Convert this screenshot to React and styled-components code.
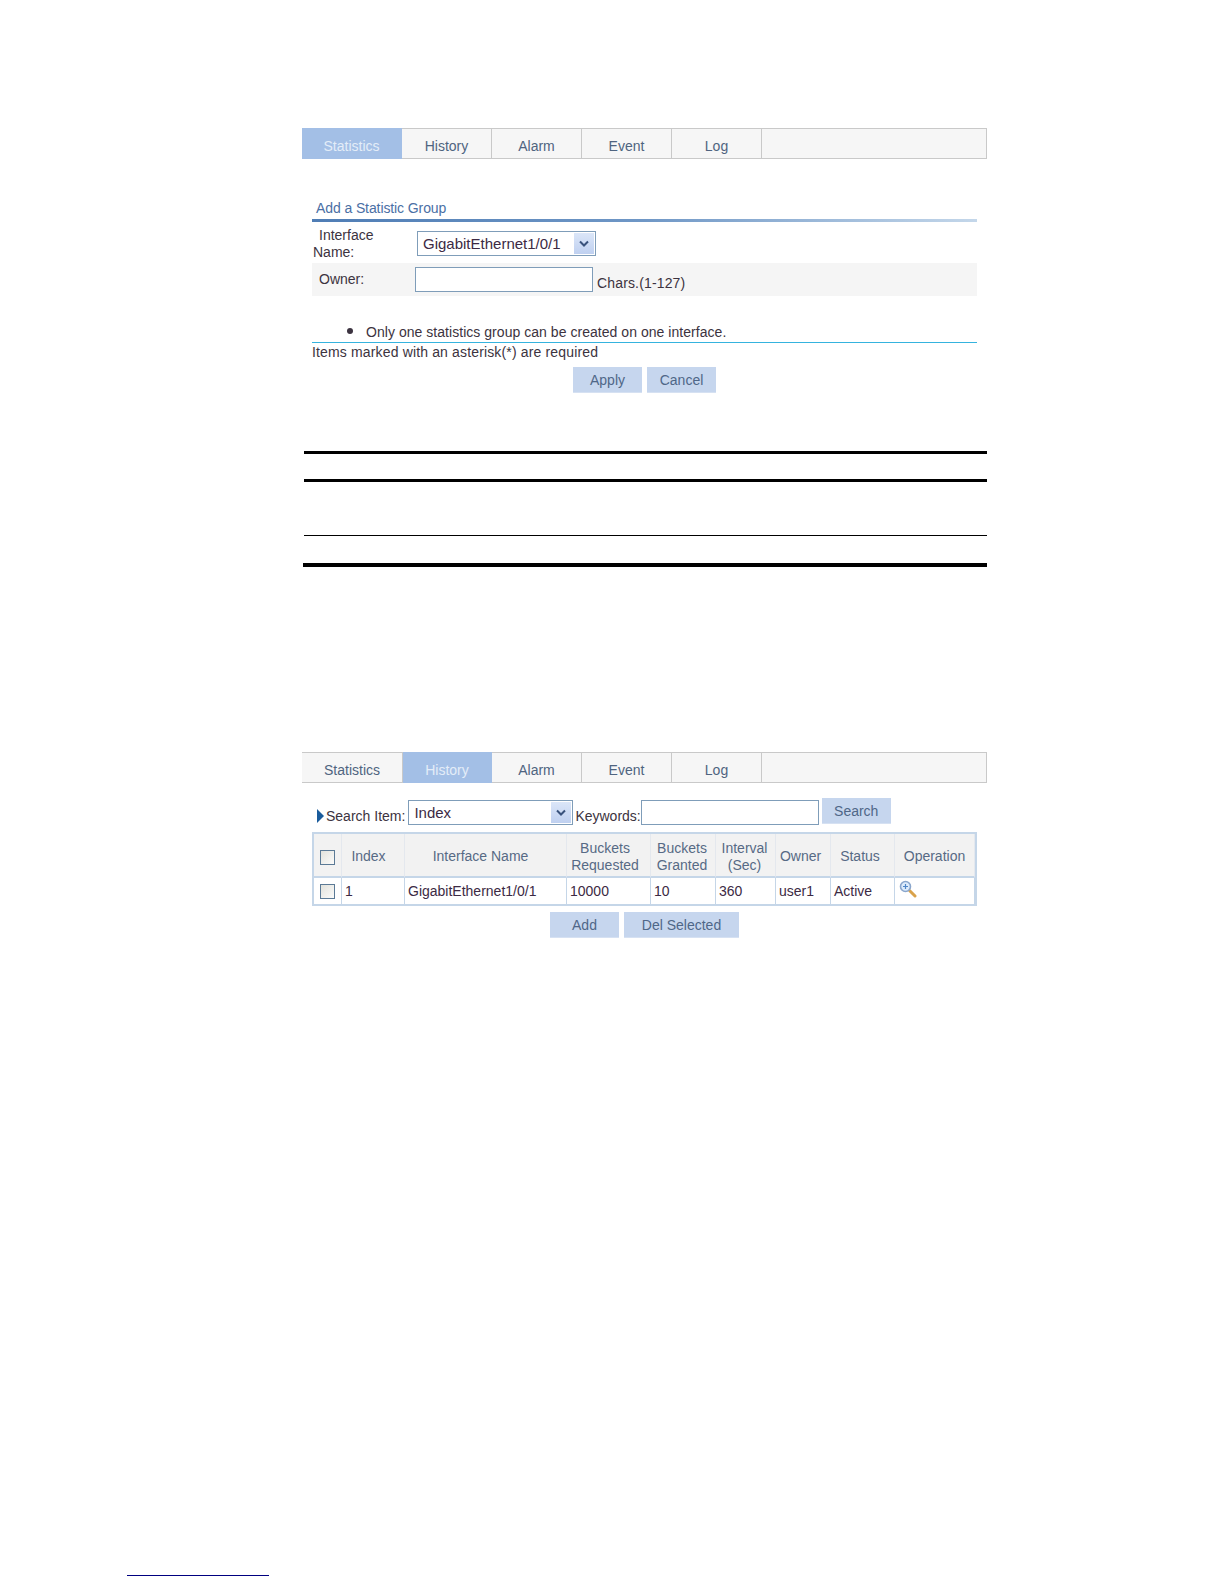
import React from 'react';
import styled, { createGlobalStyle } from 'styled-components';

const GlobalStyle = createGlobalStyle`
  html, body {
    margin: 0;
    padding: 0;
    background: #ffffff;
  }
  body {
    font-family: "Liberation Sans", Arial, sans-serif;
    font-size: 14px;
    color: #3c3340;
  }
`;

const Page = styled.div`
  width: 1224px;
  height: 1584px;
  padding: 128px 0 0 302px;
  box-sizing: border-box;
  position: relative;
`;

const Column = styled.div`
  width: 685px;
  margin-top: ${({ $mt }) => $mt || 0}px;
`;

const TabBar = styled.div`
  display: flex;
  height: 29px;
  background: #f6f6f6;
  border-top: 1px solid #c9c9c9;
  border-bottom: 1px solid #c9c9c9;
  border-right: 1px solid #c9c9c9;
  box-sizing: content-box;
`;

const Tab = styled.div`
  width: ${({ $w }) => $w}px;
  box-sizing: border-box;
  border-right: 1px solid #c9c9c9;
  display: flex;
  align-items: center;
  justify-content: center;
  padding-top: 5px;
  font-size: 14px;
  color: ${({ $active }) => ($active ? '#e4edf8' : '#4f6480')};
  background: ${({ $active }) => ($active ? '#a3bfe6' : 'transparent')};
  margin-top: ${({ $active }) => ($active ? '-1px' : '0')};
  margin-bottom: ${({ $active }) => ($active ? '-1px' : '0')};
  border-right-color: ${({ $active }) => ($active ? '#a3bfe6' : '#c9c9c9')};
`;

const Panel = styled.div`
  margin: 0 10px;
`;

const Title = styled.div`
  margin-top: 40px;
  padding-left: 4px;
  height: 20px;
  line-height: 18px;
  letter-spacing: -0.1px;
  color: #4a6fa5;
  font-size: 14px;
`;

const TitleRule = styled.div`
  height: 3px;
  background: linear-gradient(90deg, #4f7db5 0%, #6f97c6 50%, #c4d7ea 100%);
`;

const NameRow = styled.div`
  display: grid;
  grid-template-columns: 105px 179px;
  align-items: center;
  height: 41px;
  padding-top: 2px;
  box-sizing: border-box;
`;

const WrapLabel = styled.div`
  line-height: 17px;
  padding-left: 1px;
  color: #3c3340;
`;

const Indent = styled.span`
  display: block;
  padding-left: 6px;
`;

const Select = styled.div`
  width: ${({ $w }) => $w}px;
  height: 25px;
  box-sizing: border-box;
  border: 1px solid #7f9db9;
  background: #fff;
  display: flex;
  align-items: center;
  justify-content: space-between;
  padding: 1px 1px 1px 5px;
  font-size: 15px;
  color: #3c2a44;
`;

const SelectArrow = styled.span`
  width: 20px;
  height: 21px;
  background: linear-gradient(180deg, #dbe6f8, #bfd0f0);
  display: flex;
  align-items: center;
  justify-content: center;
`;

const OwnerRow = styled.div`
  display: flex;
  align-items: flex-start;
  height: 33px;
  background: #f5f5f5;
  padding-left: 7px;
`;

const OwnerLabel = styled.div`
  width: 96px;
  padding-top: 8px;
  line-height: 17px;
`;

const TextInput = styled.div`
  width: ${({ $w }) => $w}px;
  height: 25px;
  box-sizing: border-box;
  border: 1px solid #7f9db9;
  background: #fff;
  flex: none;
`;

const OwnerField = styled.div`
  margin-top: 4px;
`;

const Hint = styled.div`
  margin: 12px 0 0 4px;
  line-height: 17px;
  letter-spacing: 0.15px;
`;

const NoteList = styled.ul`
  margin: 26px 0 0;
  padding: 0 0 0 54px;
  font-size: 14px;
  line-height: 17px;
  height: 19px;
  letter-spacing: 0.04px;

  li::marker {
    font-size: 20px;
  }
`;

const NoteRule = styled.div`
  height: 1px;
  margin-top: 1px;
  background: #35b3de;
`;

const Required = styled.div`
  line-height: 17px;
  margin-top: 1px;
  letter-spacing: 0.15px;
`;

const ButtonRow = styled.div`
  display: flex;
  justify-content: center;
  gap: 5px;
  margin-top: ${({ $mt }) => $mt}px;
`;

const Button = styled.div`
  width: ${({ $w }) => $w}px;
  height: 26px;
  box-sizing: border-box;
  background: #c6d6ee;
  border-bottom: 1px solid #d6e1f2;
  color: #4f6788;
  font-size: 14px;
  display: flex;
  align-items: center;
  justify-content: center;
  flex: none;
`;

const NoteBox = styled.div`
  margin-top: 58px;
  margin-left: 2px;
`;

const Rule = styled.div`
  height: ${({ $h }) => $h}px;
  background: #000;
  margin-top: ${({ $mt }) => $mt}px;
  margin-left: ${({ $ml }) => $ml || 0}px;
`;

const SearchBar = styled.div`
  display: flex;
  align-items: flex-start;
  margin: 15px 0 0 15px;
  height: 34px;
`;

const SearchLabel = styled.span`
  display: flex;
  align-items: center;
  gap: 2px;
  height: 30px;
  padding-top: 6px;
  box-sizing: border-box;
  margin-right: ${({ $mr }) => $mr}px;
  margin-left: ${({ $ml }) => $ml || 0}px;
  white-space: nowrap;
`;

const SearchBarCell = styled.div`
  margin-top: ${({ $mt }) => $mt || 0}px;
  margin-left: ${({ $ml }) => $ml || 0}px;
`;

const Triangle = styled.i`
  width: 0;
  height: 0;
  border-style: solid;
  border-width: 7px 0 7px 7px;
  border-color: transparent transparent transparent #1a5c9c;
`;

const Table = styled.table`
  border-collapse: separate;
  border-spacing: 0;
  table-layout: fixed;
  width: 665px;
  border: 2px solid #c5d6e8;
  font-size: 14px;
  box-sizing: border-box;
`;

const Th = styled.th`
  height: 44px;
  box-sizing: border-box;
  padding: 3px ${({ $pr }) => $pr || 0}px 0 0;
  background: #f2f2f2;
  font-weight: normal;
  color: #576a85;
  line-height: 17px;
  text-align: center;
  border-right: 1px solid #e4e8ee;
  border-bottom: 2px solid #c5d6e8;
`;

const Td = styled.td`
  height: 26px;
  padding: 0 0 0 3px;
  background: #fff;
  color: #3c2a44;
  border-right: 1px solid #c5d6e8;
  white-space: nowrap;
  overflow: hidden;
`;

const CheckCell = styled(Td)`
  padding: 0;
  text-align: center;
`;

const Check = styled.span`
  display: inline-block;
  width: 15px;
  height: 15px;
  box-sizing: border-box;
  border: 1px solid #5b7a96;
  background: linear-gradient(135deg, #e2e2dc, #fbfbfa);
  vertical-align: middle;
`;

const OpIcon = styled.svg`
  display: block;
  margin: -5px 0 0 1px;
`;

const Footnote = styled.div`
  position: absolute;
  left: 127px;
  top: 1575px;
  width: 142px;
  height: 1px;
  background: #000080;
`;

const Caret = () => (
  <svg width="10" height="8" viewBox="0 0 10 8">
    <path d="M1 1.5 L5 5.5 L9 1.5" fill="none" stroke="#39527c" strokeWidth="2" />
  </svg>
);

const Magnifier = () => (
  <OpIcon width="18" height="18" viewBox="0 0 18 18">
    <path d="M10.5 10.5 L16 16" stroke="#d9a24a" strokeWidth="3" strokeLinecap="round" />
    <circle cx="6.5" cy="6.5" r="5" fill="#dcebfb" stroke="#8aa6cc" strokeWidth="1.6" />
    <path d="M4 6.5 H9 M6.5 4 V9" stroke="#4f86c8" strokeWidth="1.2" />
  </OpIcon>
);

const tabNames = ['Statistics', 'History', 'Alarm', 'Event', 'Log'];

const Tabs = ({ active, widths }) => (
  <TabBar>
    {tabNames.map((name, i) => (
      <Tab key={name} $w={widths[i]} $active={name === active}>
        {name}
      </Tab>
    ))}
  </TabBar>
);

const cols = [28, 63, 162, 84, 65, 60, 55, 64, 80];

export default function App() {
  return (
    <>
      <GlobalStyle />
      <Page>
        <Column>
          <Tabs active="Statistics" widths={[100, 90, 90, 90, 90]} />
          <Panel>
            <Title>Add a Statistic Group</Title>
            <TitleRule />
            <NameRow>
              <WrapLabel>
                <Indent>Interface</Indent>
                Name:
              </WrapLabel>
              <Select $w={179}>
                GigabitEthernet1/0/1
                <SelectArrow>
                  <Caret />
                </SelectArrow>
              </Select>
            </NameRow>
            <OwnerRow>
              <OwnerLabel>Owner:</OwnerLabel>
              <OwnerField>
                <TextInput $w={178} />
              </OwnerField>
              <Hint>Chars.(1-127)</Hint>
            </OwnerRow>
            <NoteList>
              <li>Only one statistics group can be created on one interface.</li>
            </NoteList>
            <NoteRule />
            <Required>Items marked with an asterisk(*) are required</Required>
            <ButtonRow $mt={6}>
              <Button $w={69}>Apply</Button>
              <Button $w={69}>Cancel</Button>
            </ButtonRow>
          </Panel>
          <NoteBox>
            <Rule $h={3} $mt={0} />
            <Rule $h={3} $mt={25} />
            <Rule $h={1} $mt={53} />
            <Rule $h={4} $mt={27} $ml={-1} />
          </NoteBox>
        </Column>
        <Column $mt={185}>
          <Tabs active="History" widths={[101, 89, 90, 90, 90]} />
          <SearchBar>
            <SearchLabel $mr={3}>
              <Triangle />
              Search Item:
            </SearchLabel>
            <SearchBarCell $mt={2}>
              <Select $w={165}>
                Index
                <SelectArrow>
                  <Caret />
                </SelectArrow>
              </Select>
            </SearchBarCell>
            <SearchLabel $ml={2} $mr={0}>Keywords:</SearchLabel>
            <SearchBarCell $mt={2}>
              <TextInput $w={178} />
            </SearchBarCell>
            <SearchBarCell $ml={3}>
              <Button $w={69}>Search</Button>
            </SearchBarCell>
          </SearchBar>
          <Panel>
            <Table>
              <colgroup>
                {cols.map((w, i) => (
                  <col key={i} width={w} />
                ))}
              </colgroup>
              <thead>
                <tr>
                  <Th>
                    <Check />
                  </Th>
                  <Th $pr={9}>Index</Th>
                  <Th $pr={10}>Interface Name</Th>
                  <Th $pr={7}>
                    Buckets
                    <br />
                    Requested
                  </Th>
                  <Th $pr={2}>
                    Buckets
                    <br />
                    Granted
                  </Th>
                  <Th $pr={2}>
                    Interval
                    <br />
                    (Sec)
                  </Th>
                  <Th $pr={5}>Owner</Th>
                  <Th $pr={5}>Status</Th>
                  <Th>Operation</Th>
                </tr>
              </thead>
              <tbody>
                <tr>
                  <CheckCell>
                    <Check />
                  </CheckCell>
                  <Td>1</Td>
                  <Td>GigabitEthernet1/0/1</Td>
                  <Td>10000</Td>
                  <Td>10</Td>
                  <Td>360</Td>
                  <Td>user1</Td>
                  <Td>Active</Td>
                  <Td>
                    <Magnifier />
                  </Td>
                </tr>
              </tbody>
            </Table>
            <ButtonRow $mt={6}>
              <Button $w={69}>Add</Button>
              <Button $w={115}>Del Selected</Button>
            </ButtonRow>
          </Panel>
        </Column>
        <Footnote />
      </Page>
    </>
  );
}
